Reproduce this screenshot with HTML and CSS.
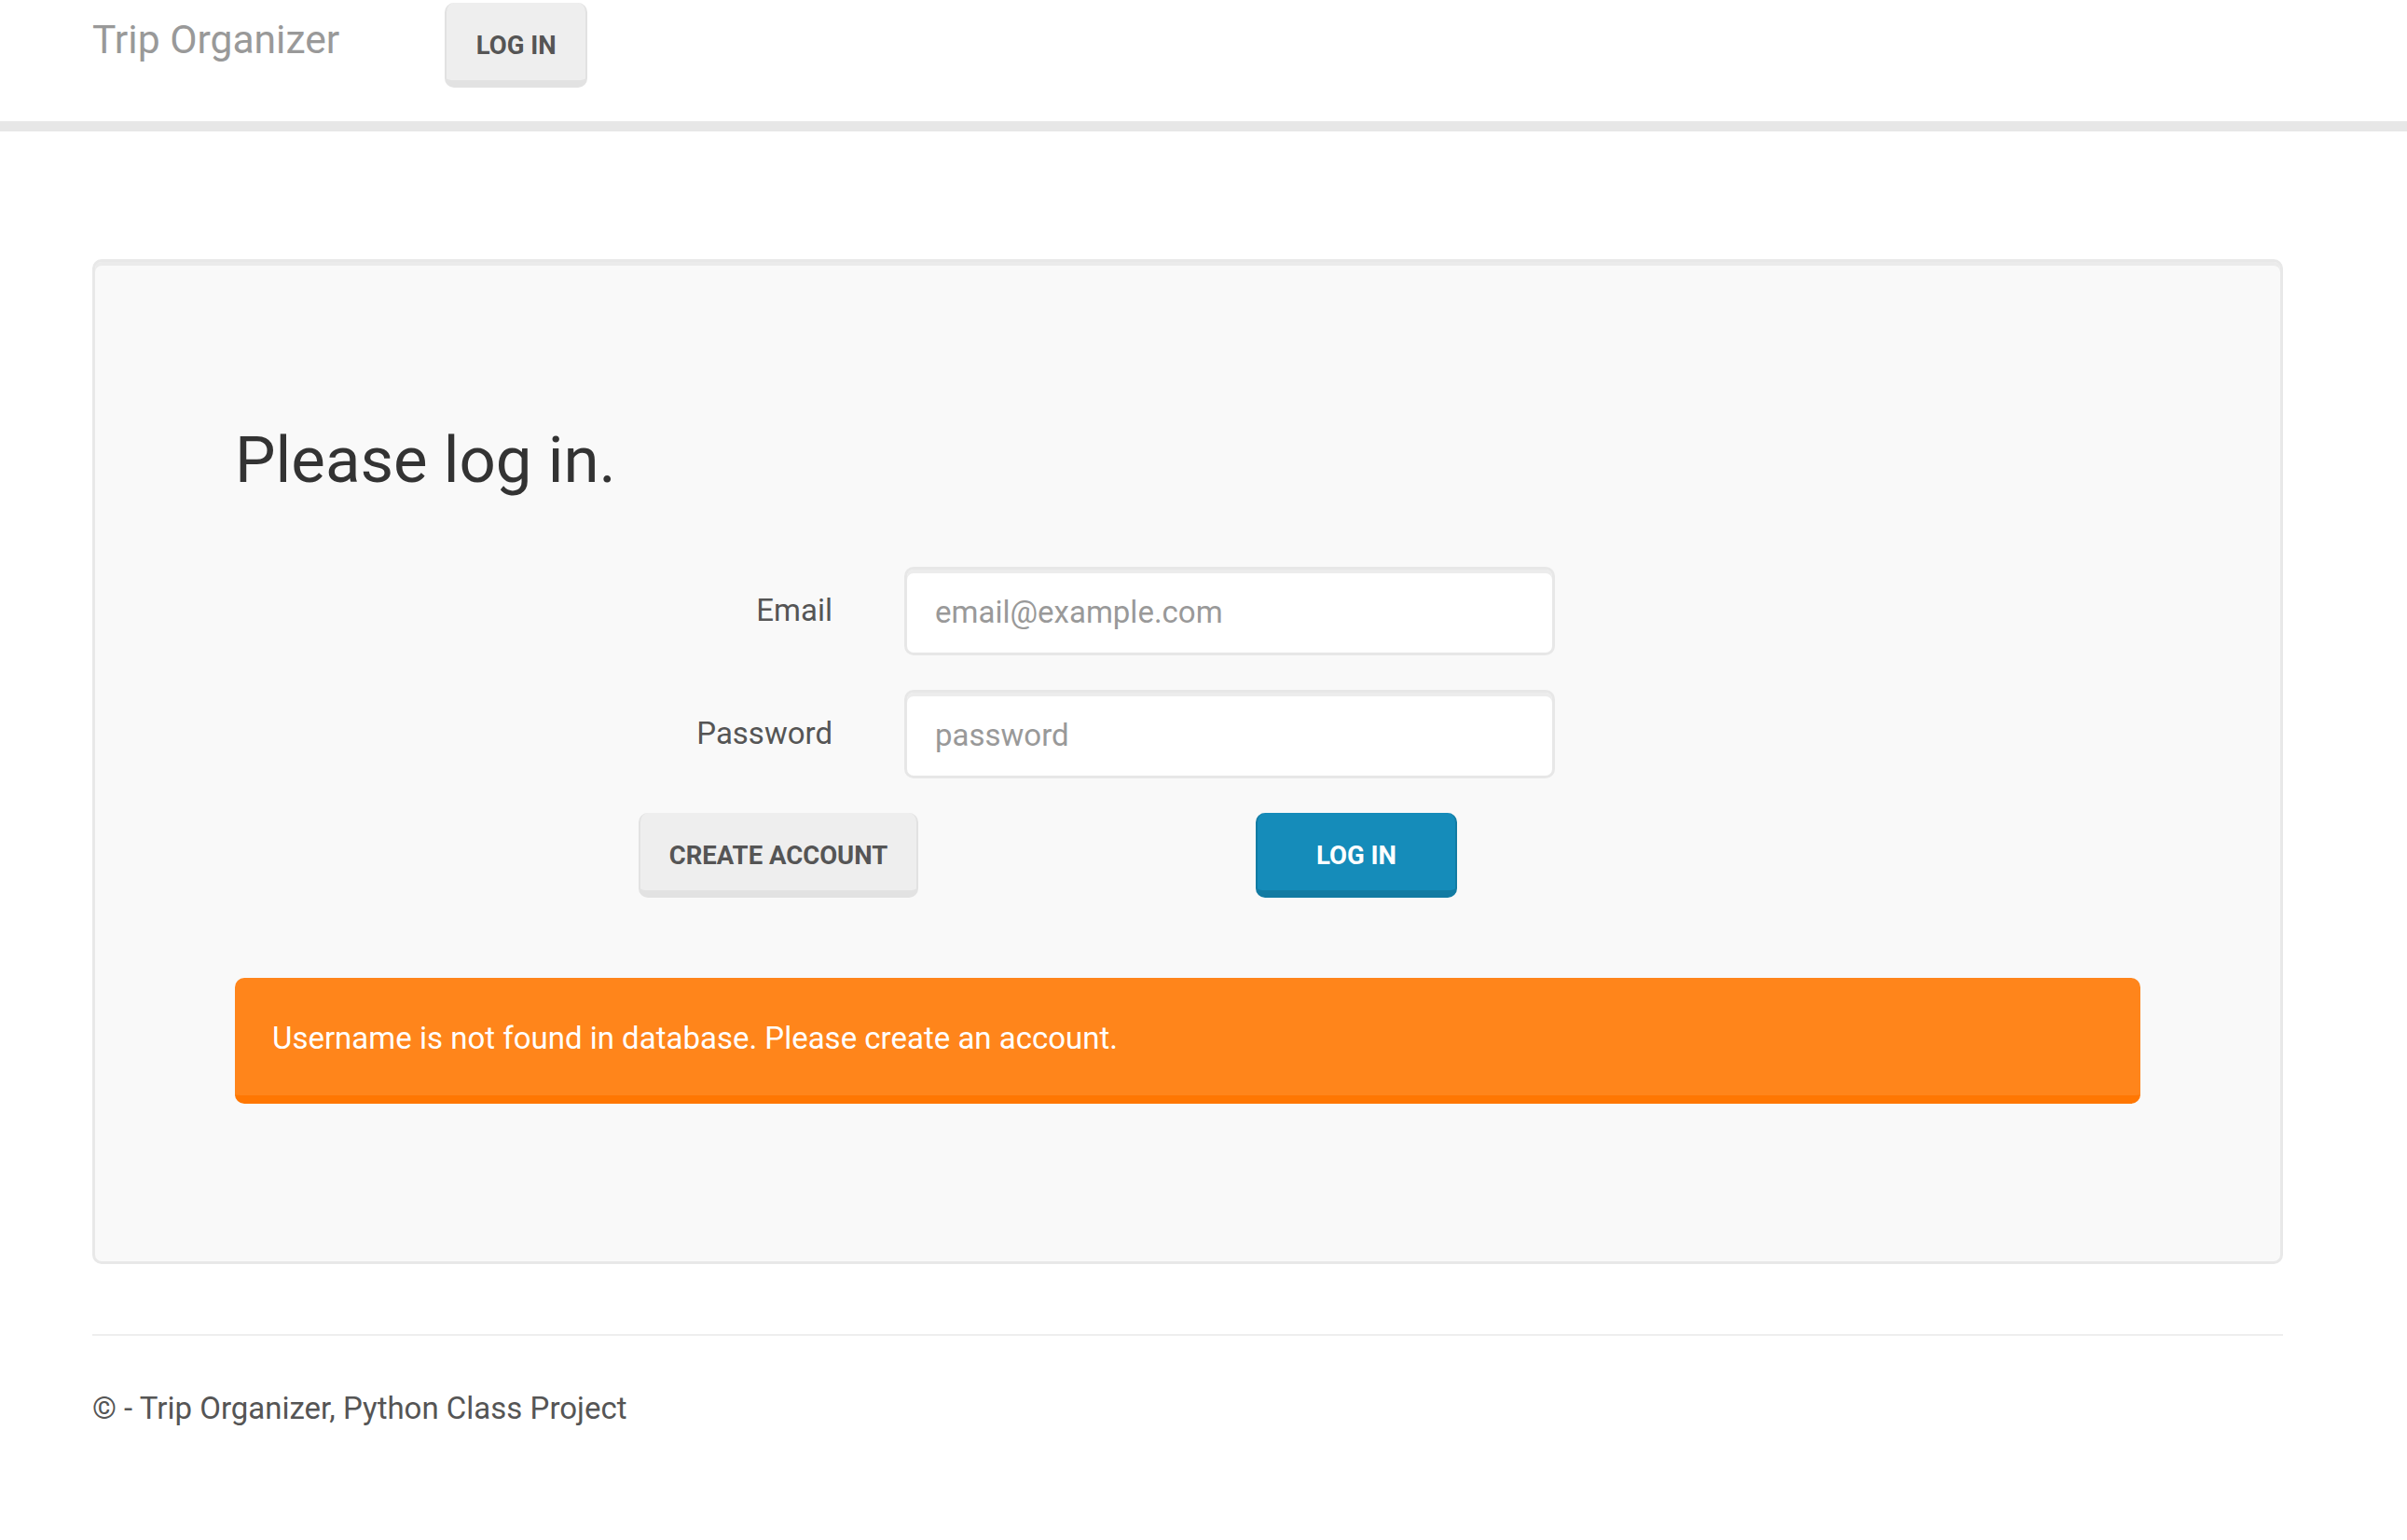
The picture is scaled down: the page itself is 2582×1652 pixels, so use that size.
FILE: index.html
```html
<!DOCTYPE html>
<html lang="en">
<head>
<meta charset="utf-8">
<title>Trip Organizer</title>
<link rel="stylesheet" href="styles.css">
</head>
<body>
<nav class="navbar">
  <div class="nav-inner">
    <span class="brand">Trip Organizer</span>
    <button class="btn btn-default nav-btn">Log in</button>
  </div>
</nav>
<main class="container">
  <section class="well">
    <h2 class="title">Please log in.</h2>
    <form class="form">
      <div class="form-group">
        <label class="label" for="email">Email</label>
        <input class="input" id="email" type="text" placeholder="email@example.com">
      </div>
      <div class="form-group">
        <label class="label" for="password">Password</label>
        <input class="input" id="password" type="password" placeholder="password">
      </div>
      <div class="actions">
        <button type="button" class="btn btn-default create-btn">Create account</button>
        <button type="button" class="btn btn-primary login-btn">Log in</button>
      </div>
    </form>
    <div class="alert">Username is not found in database. Please create an account.</div>
  </section>
  <hr class="rule">
  <footer class="footer">© - Trip Organizer, Python Class Project</footer>
</main>
</body>
</html>
```

FILE: styles.css
```css
html, body {
  margin: 0;
  padding: 0;
  background: #ffffff;
}
body {
  font-family: Roboto, "Liberation Sans", sans-serif;
  font-size: 33px;
  line-height: 47px;
  color: #555555;
}
.navbar {
  height: 130px;
  border-bottom: 11px solid #e7e7e7;
  background: #ffffff;
}
.nav-inner {
  display: flex;
  align-items: flex-start;
  padding-left: 99px;
}
.brand {
  margin-top: 21px;
  font-size: 42.6px;
  line-height: 42.6px;
  color: #999999;
  margin-right: 113px;
}
.btn {
  box-sizing: border-box;
  font-family: Roboto, "Liberation Sans", sans-serif;
  font-weight: 700;
  font-size: 27.5px;
  line-height: 74px;
  text-transform: uppercase;
  height: 91px;
  padding: 8px 31px 0 31px;
  border-style: solid;
  border-width: 0 2px 8px 2px;
  border-radius: 10px;
  cursor: pointer;
  white-space: nowrap;
}
.btn-default {
  background: #eeeeee;
  border-color: #e2e2e2;
  color: #555555;
}
.btn-primary {
  background: #158cba;
  border-color: #127ba3;
  color: #ffffff;
}
.nav-btn {
  margin-top: 3px;
  width: 153px;
  padding-left: 0;
  padding-right: 0;
}
.container {
  width: 2350px;
  margin: 0 0 0 99px;
}
.well {
  margin-top: 137px;
  box-sizing: border-box;
  background: #f9f9f9;
  border: 3px solid #e8e8e8;
  border-radius: 10px;
  box-shadow: inset 0 4px 0 #ebebeb;
  padding: 175px 150px 169px 150px;
}
.title {
  margin: 0 0 76px 0;
  font-size: 69px;
  line-height: 76px;
  font-weight: 400;
  color: #333333;
}
.form-group {
  display: flex;
  align-items: flex-start;
  margin-bottom: 37px;
}
.label {
  width: 641px;
  margin-right: 77px;
  text-align: right;
  line-height: 93px;
  color: #555555;
}
.input {
  box-sizing: border-box;
  width: 698px;
  height: 95px;
  padding: 2px 30px 0 30px;
  border: 3px solid #e7e7e7;
  border-radius: 10px;
  box-shadow: inset 0 4px 0 #ececec;
  background: #ffffff;
  font-family: Roboto, "Liberation Sans", sans-serif;
  font-size: 33px;
  color: #555555;
  outline: none;
}
.input::placeholder {
  color: #999999;
  opacity: 1;
}
.actions {
  display: flex;
  align-items: flex-start;
  padding-left: 433px;
}
.create-btn {
  width: 300px;
  padding-left: 0;
  padding-right: 0;
  margin-right: 362px;
}
.login-btn {
  width: 216px;
  padding-left: 0;
  padding-right: 0;
}
.alert {
  margin-top: 86px;
  background: #ff851b;
  color: #ffffff;
  border-bottom: 9px solid #ff7702;
  border-radius: 10px;
  padding: 41px 40px 38px 40px;
  line-height: 47px;
}
.rule {
  margin: 75px 0 0 0;
  border: 0;
  height: 2px;
  background: #eeeeee;
}
.footer {
  margin-top: 54px;
  line-height: 47px;
  color: #555555;
}
```
